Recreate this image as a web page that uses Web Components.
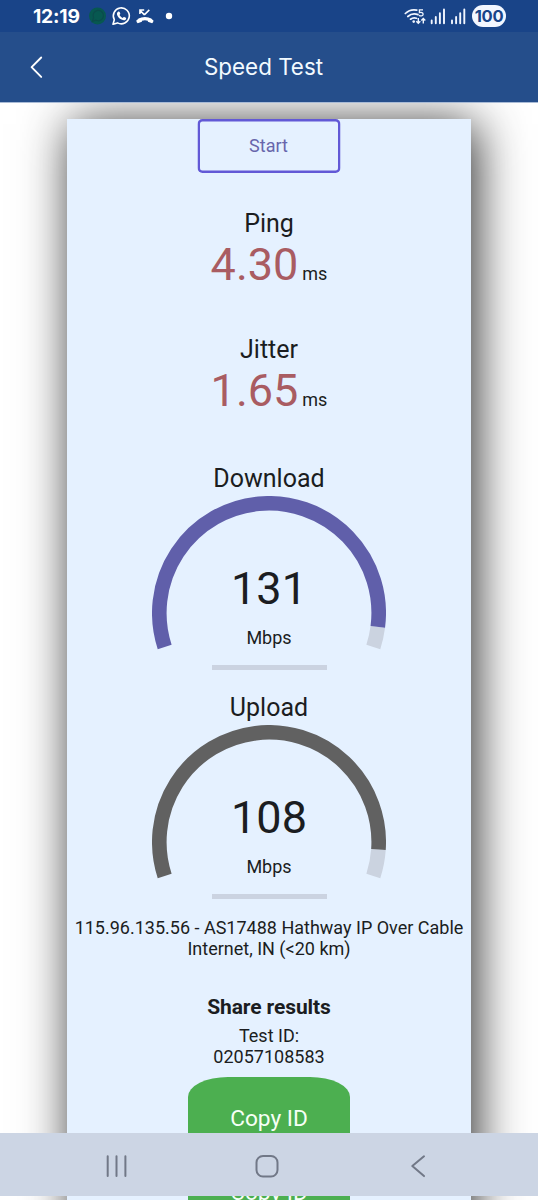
<!DOCTYPE html>
<html lang="en">
<head>
<meta charset="utf-8">
<title>Speed Test</title>
<style>
html,body{margin:0;height:1200px;overflow:hidden;background:#fff}
body{font-family:Roboto,"Liberation Sans",sans-serif;color:#1b1d21}
</style>
</head>
<body>
<speed-app></speed-app>
<script>
const define = (name, html) => customElements.define(name, class extends HTMLElement {
  connectedCallback() {
    if (this.shadowRoot) return;
    const t = document.createElement('template');
    t.innerHTML = typeof html === 'function' ? html(this) : html;
    this.attachShadow({mode: 'open'}).append(t.content.cloneNode(true));
  }
});

define('status-bar', `
<style>
:host{display:flex;height:32px;background:#194488;color:#fff;align-items:center;box-sizing:border-box;padding:0 32px 0 33px;font-family:Inter,sans-serif}
.time{font-weight:700;font-size:19.300px;line-height:32px;width:56px;letter-spacing:-.2px;white-space:nowrap}
.grow{flex:1}
svg{display:block}
.batt{background:#f3f7ff;color:#194488;border-radius:11px;width:34px;height:22px;line-height:22px;font-weight:700;font-size:16.500px;text-align:center;letter-spacing:-.3px}
</style>
<span class="time">12:19</span>
<svg width="100" height="32" viewBox="89 0 100 32" fill="none">
  <circle cx="97.500" cy="16" r="8.500" fill="#075850"/>
  <path d="M92.500 21.500l1-3.800a5.200 5.200 0 1 1 2.200 2.400z" stroke="#0b4b4b" stroke-width="1.200"/>
  <path d="M113 24.300l1.300-4.600a8 8 0 1 1 3.200 3.200z" stroke="#fff" stroke-width="1.600" stroke-linejoin="round"/>
  <path d="M118.100 11.700c.5-.5 1.200-.4 1.500.2l.7 1.600c.1.400-.6 1.200-.8 1.500.8 1.500 1.900 2.400 3.300 3 .5-.4 1-1.300 1.400-1.100l1.700.9c.5.300.2 1.400-.3 1.900-.9.800-2.300.8-4.100-.1-2.300-1.100-4-3.200-4.500-5.200-.2-1.200.3-2.100 1.100-2.700z" fill="#fff"/>
  <path d="M144.500 14.900l-4.300-4.300M139.900 14V10h4.300M144.300 14.900l5-5" stroke="#fff" stroke-width="1.500"/>
  <path d="M138.500 20.500Q145 16.800 151.300 20.500" stroke="#fff" stroke-width="3.200"/>
  <path d="M136.400 20.300l3-1.800 2.500 1v2.300l-4.200 1.500q-1.500-.2-1.300-3zM153.400 20.300l-3-1.800-2.500 1v2.300l4.200 1.500q1.500-.2 1.300-3z" fill="#fff"/>
  <circle cx="169" cy="16" r="3.200" fill="#fff"/>
</svg>
<span class="grow"></span>
<svg width="68" height="32" viewBox="404 0 68 32" fill="none" stroke="#f1f6ff">
  <path d="M405.300 13.500a13 13 0 0 1 11.500-3.300M407.800 16.500a10 10 0 0 1 10.200-1.900M410.500 19.200a6.500 6.500 0 0 1 6-1" stroke-width="1.700" stroke-linecap="round"/>
  <circle cx="413.700" cy="21.600" r="1.300" fill="#f1f6ff" stroke="none"/>
  <path d="M423 9.900h-3.600v2.700c2-.6 3.700-.1 3.700 1.600 0 1.900-2.700 2.200-4.100 1" stroke-width="1.300"/>
  <path d="M418.300 18v5.300m-2-2l2 2 2-2M423.300 23.500v-5m-2 2l2-2 2 2" stroke-width="1.400"/>
  <path d="M431.700 20.500v2.800M435.800 17v6.300M439.900 13.300v10M444 9.500v13.800M452 20.500v2.800M456.100 17v6.300M460.200 13.300v10M464.300 9.500v13.800" stroke-width="1.900" stroke-linecap="round"/>
</svg>
<span class="batt">100</span>`);

define('title-bar', `
<style>
:host{display:grid;grid-template-columns:74px 1fr 85px;height:70px;background:#254e8b;border-bottom:1px solid #a9bbd6;align-items:center;color:#f3faff;position:relative;z-index:1}
svg{display:block;margin-left:28px}
h1{margin:0;font:400 22.400px/70px Inter,sans-serif;text-align:center;white-space:nowrap}
</style>
<svg width="20" height="26" viewBox="0 0 20 26" fill="none" stroke="#fff" stroke-width="1.900" stroke-linecap="round" stroke-linejoin="round"><path d="M13.200 3.500L3.600 13.200l9.600 9.700"/></svg>
<h1><slot></slot></h1>`);

define('start-button', `
<style>
:host{display:block;width:143px;height:54px;box-shadow:inset 0 0 0 2.500px #6259d6;border-radius:5px;font-size:18px;line-height:54px;text-align:center;color:#6866ac;margin:0 auto;transform:translateX(-.5px)}
</style><slot></slot>`);

define('latency-stat', el => `
<style>
:host{display:block;text-align:center;white-space:nowrap}
h2{margin:0;font:400 25px/30px Roboto,sans-serif}
.v{font-size:45px;line-height:52px;color:#a95c62}
.u{font-size:18px}
.row{line-height:52px;height:52px}
</style>
<h2>${el.getAttribute('label')}</h2>
<div class="row"><span class="v">${el.getAttribute('value')}</span> <span class="u">ms</span></div>`);

const polar = (deg, r = 109.7) => {
  const a = deg * Math.PI / 180;
  return `${(117 + r * Math.cos(a)).toFixed(2)} ${(117 + r * Math.sin(a)).toFixed(2)}`;
};
define('speed-gauge', el => {
  const end = +el.getAttribute('end');
  return `
<style>
:host{display:block;height:229px;text-align:center}
h2{margin:0;font:400 25px/30px Roboto,sans-serif;height:32px}
.dial{display:grid;width:234px;height:169px;margin:0 auto}
.dial>*{grid-area:1/1}
svg{display:block}
.text{padding-top:66px}
.value{font-size:45px;line-height:53px}
.unit{font-size:18px;line-height:22px;padding-top:12px}
.bar{width:115px;height:5px;margin:0 auto;background:#cbd3e1}
</style>
<h2>${el.getAttribute('label')}</h2>
<div class="dial">
  <svg width="234" height="168" viewBox="0 0 234 168" fill="none" stroke-width="14.600">
    <path d="M${polar(end)}A109.700 109.700 0 0 1 ${polar(18)}" stroke="#cbd3e0"/>
    <path d="M${polar(162)}A109.700 109.700 0 1 1 ${polar(end)}" stroke="${el.getAttribute('color')}"/>
  </svg>
  <div class="text"><div class="value">${el.getAttribute('value')}</div><div class="unit">Mbps</div></div>
</div>
<div class="bar"></div>`;
});

define('copy-button', `
<style>
:host{display:block;width:162px;height:83px;margin:0 auto;background:#4caf50;color:#f6fff6;border-radius:40px/20px;text-align:center;font-size:22.700px;line-height:83px}
</style><slot></slot>`);

define('result-card', `
<style>
:host{display:block;width:404px;height:1150px;margin:16px auto 0 67px;background:#e5f1ff;box-shadow:5px 5px 46px rgba(0,0,0,.84);flex:none}
</style><slot></slot>`);

define('nav-bar', `
<style>
:host{display:block;height:63px;background:#ccd5e4}
svg{display:block}
</style>
<svg width="538" height="63" viewBox="0 1133 538 63" fill="none" stroke="#717887" stroke-width="2" stroke-linecap="round" stroke-linejoin="round">
  <path d="M107.700 1156.300v19.700M116.500 1156.300v19.700M125.400 1156.300v19.700"/>
  <rect x="256.500" y="1156" width="21" height="20.500" rx="6.500"/>
  <path d="M424 1156.300l-11.700 9.800 11.700 10"/>
</svg>`);

define('speed-app', `
<style>
:host{display:grid;grid-template-rows:32px 71px 1030px 63px 4px;width:538px;height:1200px;overflow:hidden}
main{overflow:hidden;display:flex}
.lat1{padding-top:36px}
.lat2{padding-top:44px}
.down{padding-top:47px}
p{margin:0;text-align:center;font-size:18px;line-height:21px}
.isp{margin-top:-5px}
h3{margin:33px 0 0;font:700 21px/30px Roboto,sans-serif;text-align:center;letter-spacing:-.1px}
.id{padding-top:3px;margin-bottom:10px}
.tail{overflow:hidden;display:flex}
.tail result-card{margin-top:-45px;height:80px}
</style>
<status-bar></status-bar>
<title-bar>Speed Test</title-bar>
<main>
  <result-card>
    <start-button>Start</start-button>
    <latency-stat class="lat1" label="Ping" value="4.30"></latency-stat>
    <latency-stat class="lat2" label="Jitter" value="1.65"></latency-stat>
    <speed-gauge class="down" label="Download" value="131" end="7.300" color="#605faa"></speed-gauge>
    <speed-gauge label="Upload" value="108" end="3.900" color="#616161"></speed-gauge>
    <p class="isp">115.96.135.56 - AS17488 Hathway IP Over Cable<br>Internet, IN (&lt;20 km)</p>
    <h3>Share results</h3>
    <p class="id">Test ID:<br>02057108583</p>
    <copy-button>Copy ID</copy-button>
  </result-card>
</main>
<nav-bar></nav-bar>
<div class="tail"><result-card><copy-button>Copy ID</copy-button></result-card></div>`);
</script>
</body>
</html>
